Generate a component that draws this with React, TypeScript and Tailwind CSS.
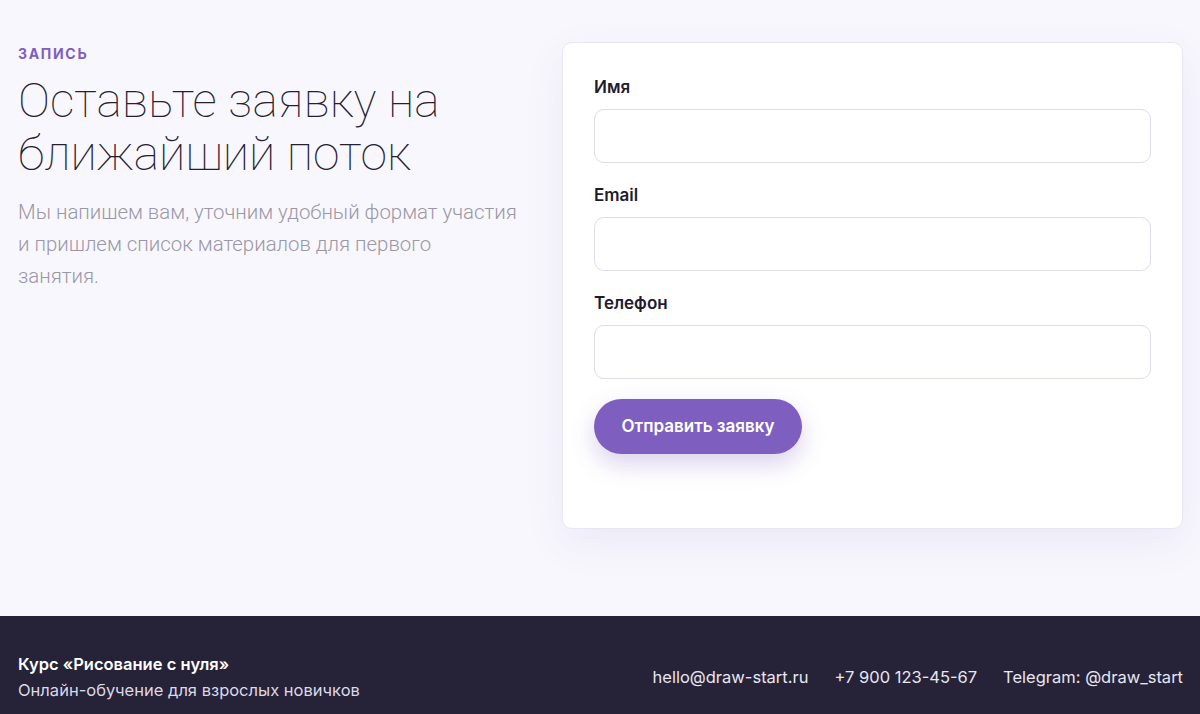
import React from "react";

const Field: React.FC<{ label: string; type?: string }> = ({ label, type = "text" }) => (
  <label className="block">
    <span className="block text-[17px] leading-6 font-semibold text-[#1f1b2e]">{label}</span>
    <input
      type={type}
      className="mt-[10px] block w-full h-[54px] rounded-[10px] border border-[#dedbeb] bg-white px-4 outline-none"
    />
  </label>
);

const App: React.FC = () => {
  return (
    <div className="min-h-screen bg-[#f8f7fd] font-['Inter',sans-serif]">
      <section className="pl-[18px] pr-[17px] pt-[42px] pb-[87px]">
        <div className="grid grid-cols-[1fr_621px] gap-[44px] items-start">
          {/* Left text */}
          <div className="pt-[2px]">
            <p className="text-[14px] leading-5 font-bold tracking-[0.12em] text-[#7d5fc0] uppercase">
              Запись
            </p>
            <h1 className="mt-[10px] font-['Roboto',sans-serif] font-thin text-[48px] leading-[53px] text-[#24202f]">
              Оставьте заявку на ближайший поток
            </h1>
            <p className="mt-[16px] max-w-[505px] font-['Roboto',sans-serif] font-light text-[20.4px] leading-[32px] text-[#9b98a5]">
              Мы напишем вам, уточним удобный формат участия и пришлем список материалов для первого
              <br />
              занятия.
            </p>
          </div>

          {/* Form card */}
          <form className="bg-white border border-[#e8e6f2] rounded-[10px] shadow-[0_14px_40px_rgba(90,70,160,0.08)] px-[31px] pt-[32px] pb-[74px]">
            <div className="flex flex-col gap-[20px]">
              <Field label="Имя" />
              <Field label="Email" type="email" />
              <Field label="Телефон" type="tel" />
            </div>
            <button
              type="button"
              className="mt-[20px] h-[55px] w-[208px] rounded-full bg-[#7e5fc0] text-white text-[17px] font-semibold shadow-[0_10px_24px_rgba(126,95,192,0.28)]"
            >
              Отправить заявку
            </button>
          </form>
        </div>
      </section>

      <footer className="bg-[#262238] pl-[18px] pr-[17px] pt-[35px] pb-[14px]">
        <div className="flex items-center justify-between">
          <div>
            <p className="text-[16.5px] leading-[26px] font-semibold text-white">Курс «Рисование с нуля»</p>
            <p className="text-[16.5px] leading-[26px] text-[#dcd9e6]">Онлайн-обучение для взрослых новичков</p>
          </div>
          <div className="flex items-center gap-[26px] text-[16.5px] text-[#e8e6f0]">
            <span>hello@draw-start.ru</span>
            <span>+7 900 123-45-67</span>
            <span>Telegram: @draw_start</span>
          </div>
        </div>
      </footer>
    </div>
  );
};

export default App;
